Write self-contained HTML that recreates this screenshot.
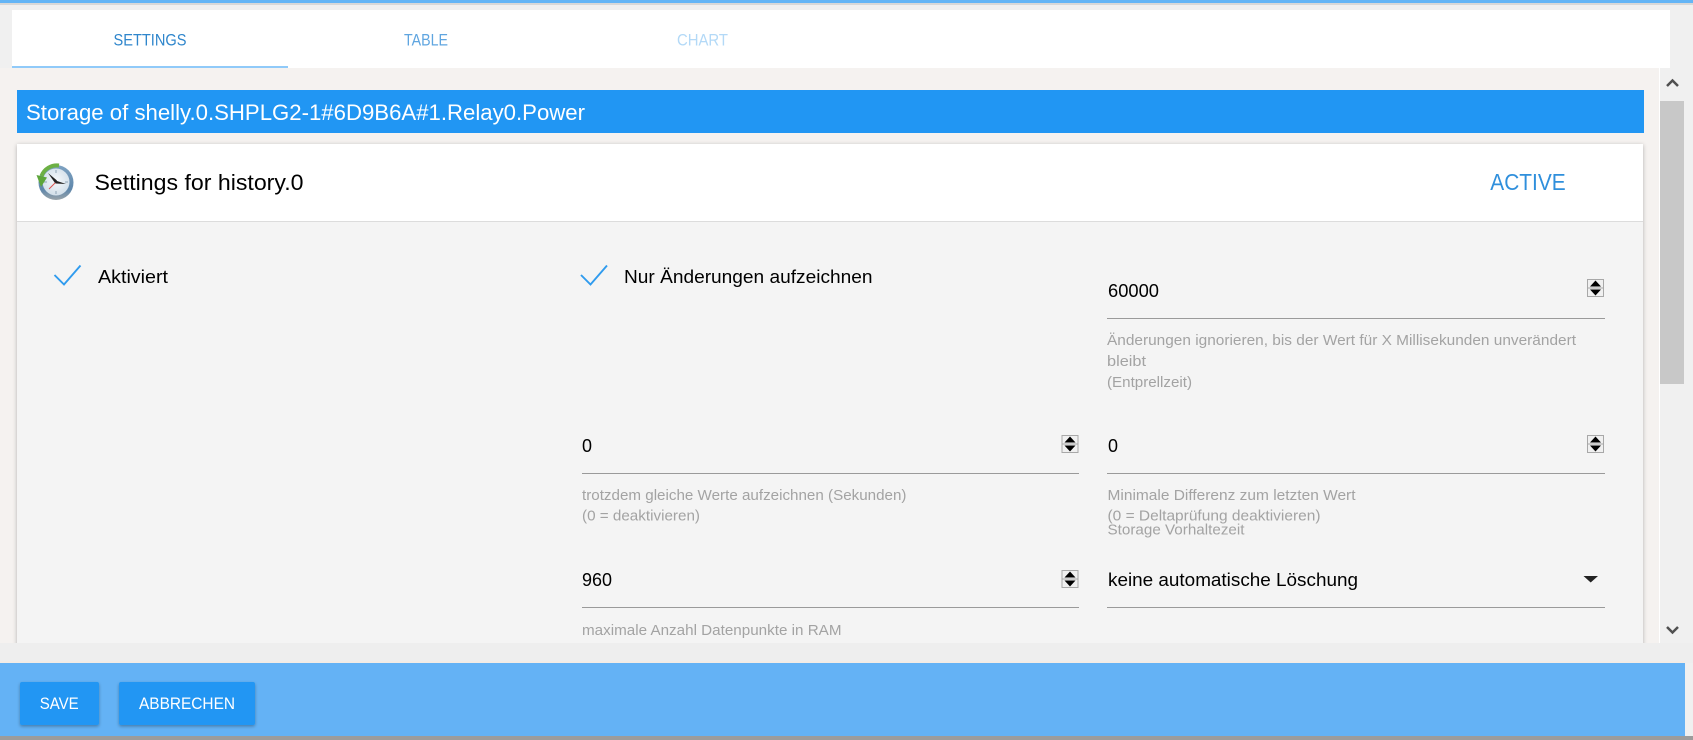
<!DOCTYPE html>
<html lang="de">
<head>
<meta charset="utf-8">
<title>Storage settings</title>
<style>
html,body{margin:0;padding:0;width:1693px;height:740px;overflow:hidden;background:#f0f0f0}
svg{display:block}
text{font-family:"Liberation Sans",sans-serif}
.h{font-size:15px;fill:#a3a3a3}
.v{font-size:18px;fill:#000}
</style>
</head>
<body>
<svg width="1693" height="740" viewBox="0 0 1693 740" xmlns="http://www.w3.org/2000/svg">
<defs>
<filter id="s" x="-2%" y="-5%" width="104%" height="110%"><feDropShadow dx="0" dy="1" stdDeviation="2" flood-color="#000" flood-opacity=".28"/></filter>
<filter id="b" x="-15%" y="-15%" width="130%" height="140%"><feDropShadow dx="0" dy="1.5" stdDeviation="1.5" flood-color="#000" flood-opacity=".3"/></filter>
<clipPath id="c"><rect x="0" y="68" width="1660" height="575"/></clipPath>
<linearGradient id="ring" x1="0" y1="0" x2="0" y2="1"><stop offset="0" stop-color="#7fa3c2"/><stop offset=".7" stop-color="#5f87ab"/><stop offset="1" stop-color="#9aa4aa"/></linearGradient>
<radialGradient id="face" cx=".5" cy=".45" r=".6"><stop offset="0" stop-color="#f6f9fb"/><stop offset="1" stop-color="#cfdde8"/></radialGradient>
<g id="spin">
<rect x=".5" y=".5" width="16" height="17" fill="#f0f0f0" stroke="#a8a8a8"/>
<line x1="0" y1="9" x2="17" y2="9" stroke="#a8a8a8"/>
<path d="M8.500 1.500L14 7.500H3Z M3 10.500H14L8.500 16.500Z" fill="#000"/>
</g>
</defs>

<rect width="1693" height="740" fill="#f0f0f0"/>
<rect width="1693" height="3" fill="#64b5f6"/>
<rect y="3" width="1693" height="2" fill="#d8d8d8"/>

<!-- tabs -->
<rect x="12" y="10" width="1658" height="58" fill="#fff"/>
<rect x="12" y="66" width="276" height="2" fill="#90caf9"/>
<text x="113.500" y="45.500" font-size="17" fill="#2f86cc" textLength="73" lengthAdjust="spacingAndGlyphs">SETTINGS</text>
<text x="404" y="45.500" font-size="17" fill="#5fa5e0" textLength="44" lengthAdjust="spacingAndGlyphs">TABLE</text>
<text x="677" y="45.500" font-size="17" fill="#b3d9f7" textLength="51" lengthAdjust="spacingAndGlyphs">CHART</text>

<!-- scroll area -->
<rect x="0" y="68" width="1660" height="575" fill="#f5f2f0"/>
<rect x="1659" y="68" width="1" height="575" fill="#fff"/>
<g clip-path="url(#c)">
<rect x="17" y="90" width="1627" height="43" fill="#2196f3"/>
<text x="26" y="120" font-size="22" fill="#fff" textLength="559" lengthAdjust="spacingAndGlyphs">Storage of shelly.0.SHPLG2-1#6D9B6A#1.Relay0.Power</text>

<rect x="17" y="144" width="1626" height="540" fill="#f4f4f4" filter="url(#s)"/>
<rect x="17" y="144" width="1626" height="77" fill="#fff"/>
<rect x="17" y="221" width="1626" height="1" fill="#dcdcdc"/>

<!-- clock icon -->
<circle cx="56" cy="182.500" r="17.500" fill="url(#ring)"/>
<circle cx="56" cy="182" r="13.500" fill="url(#face)"/>
<path d="M56 170v3M56 191v3M44 182h3M65 182h3" stroke="#8fa5b6" stroke-width="1"/>
<path d="M59 165.500A16.500 16.500 0 0 0 41.500 176" fill="none" stroke="#6cb044" stroke-width="4"/>
<path d="M36.500 175L47 177.500L41 187Z" fill="#5da63a"/>
<path d="M56 182L49 189" stroke="#d9534f" stroke-width="1"/>
<path d="M57 180.500L48 173L55 183Z" fill="#222"/>
<path d="M55.500 180.500L66 184L55.500 183.500Z" fill="#222"/>

<text x="94.500" y="190" font-size="22" fill="#000" textLength="209" lengthAdjust="spacingAndGlyphs">Settings for history.0</text>
<text x="1490.300" y="190" font-size="23" fill="#2f8fdc" textLength="75.400" lengthAdjust="spacingAndGlyphs">ACTIVE</text>

<!-- checks -->
<path d="M54.500 275L64 284.500L80.500 265.500" fill="none" stroke="#2f9bee" stroke-width="1.900"/>
<text x="98" y="283" font-size="18" fill="#000" textLength="70" lengthAdjust="spacingAndGlyphs">Aktiviert</text>
<path d="M581 275L590.500 284.500L607 265.500" fill="none" stroke="#2f9bee" stroke-width="1.900"/>
<text x="624" y="283" font-size="18" fill="#000" textLength="248.500" lengthAdjust="spacingAndGlyphs">Nur Änderungen aufzeichnen</text>

<!-- 60000 -->
<text class="v" x="1108" y="297" textLength="51" lengthAdjust="spacingAndGlyphs">60000</text>
<use href="#spin" x="1587" y="279"/>
<rect x="1107" y="318" width="498" height="1" fill="#9a9a9a"/>
<text class="h" x="1107" y="345" textLength="469" lengthAdjust="spacingAndGlyphs">Änderungen ignorieren, bis der Wert für X Millisekunden unverändert</text>
<text class="h" x="1107" y="366" textLength="39" lengthAdjust="spacingAndGlyphs">bleibt</text>
<text class="h" x="1107" y="387" textLength="85" lengthAdjust="spacingAndGlyphs">(Entprellzeit)</text>

<!-- row 2 -->
<text class="v" x="582" y="452" textLength="10" lengthAdjust="spacingAndGlyphs">0</text>
<use href="#spin" x="1061.500" y="435"/>
<rect x="582" y="473" width="497" height="1" fill="#9a9a9a"/>
<text class="h" x="582" y="500" textLength="324.500" lengthAdjust="spacingAndGlyphs">trotzdem gleiche Werte aufzeichnen (Sekunden)</text>
<text class="h" x="582" y="520.500" textLength="118" lengthAdjust="spacingAndGlyphs">(0 = deaktivieren)</text>

<text class="v" x="1108" y="452" textLength="10" lengthAdjust="spacingAndGlyphs">0</text>
<use href="#spin" x="1587" y="435"/>
<rect x="1107" y="473" width="498" height="1" fill="#9a9a9a"/>
<text class="h" x="1107.500" y="500" textLength="248" lengthAdjust="spacingAndGlyphs">Minimale Differenz zum letzten Wert</text>
<text class="h" x="1107.500" y="520.500" textLength="213" lengthAdjust="spacingAndGlyphs">(0 = Deltaprüfung deaktivieren)</text>
<text class="h" x="1107.500" y="534.500" textLength="137" lengthAdjust="spacingAndGlyphs">Storage Vorhaltezeit</text>

<!-- row 3 -->
<text class="v" x="582" y="586" textLength="30" lengthAdjust="spacingAndGlyphs">960</text>
<use href="#spin" x="1061.500" y="570"/>
<rect x="582" y="607" width="497" height="1" fill="#9a9a9a"/>
<text class="h" x="582" y="635" textLength="259.500" lengthAdjust="spacingAndGlyphs">maximale Anzahl Datenpunkte in RAM</text>

<text class="v" x="1108" y="586" textLength="250" lengthAdjust="spacingAndGlyphs">keine automatische Löschung</text>
<path d="M1583.500 576H1598L1590.700 582.500Z" fill="#222"/>
<rect x="1107" y="607" width="498" height="1" fill="#9a9a9a"/>
</g>

<!-- scrollbar -->
<rect x="1660" y="68" width="24" height="575" fill="#f0f0f0"/>
<rect x="1660" y="101" width="24" height="283" fill="#c8c8c8"/>
<path d="M1667 86L1672.500 80.500L1678 86" fill="none" stroke="#505050" stroke-width="2.500"/>
<path d="M1667 627L1672.500 632.500L1678 627" fill="none" stroke="#505050" stroke-width="2.500"/>

<!-- footer -->
<rect x="0" y="643" width="1693" height="20" fill="#eeeeee"/>
<rect x="0" y="661" width="1685" height="2" fill="#f3ece6"/>
<rect x="0" y="663" width="1685" height="73" fill="#64b2f5"/>
<rect x="0" y="736" width="1693" height="4" fill="#9c9c9c"/>
<rect x="20" y="682" width="79" height="43" rx="2" fill="#2196f3" filter="url(#b)"/>
<text x="39.700" y="709" font-size="17" fill="#fff" textLength="39" lengthAdjust="spacingAndGlyphs">SAVE</text>
<rect x="119" y="682" width="136" height="43" rx="2" fill="#2196f3" filter="url(#b)"/>
<text x="139" y="709" font-size="17" fill="#fff" textLength="96" lengthAdjust="spacingAndGlyphs">ABBRECHEN</text>
</svg>
</body>
</html>
